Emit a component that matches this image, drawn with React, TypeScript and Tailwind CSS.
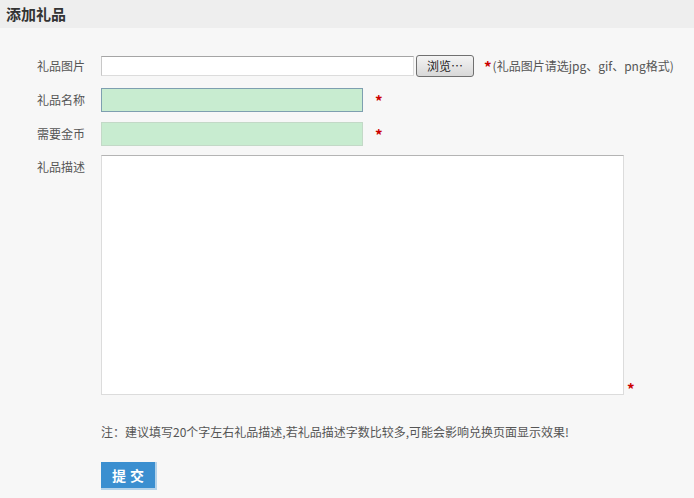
import React from "react";

const font = { fontFamily: '"Noto Sans CJK SC", "Liberation Sans", sans-serif' };

function Star() {
    return <span className="text-[15px] font-bold leading-none text-[#cc0000]">*</span>;
}

export default function App() {
    return (
        <div className="w-[694px] h-[498px] bg-[#f7f7f7] text-[12px] text-[#555]" style={font}>
            {/* title bar */}
            <div className="h-[28px] bg-[#eeeeee] pl-[6px] flex items-center">
                <h1 className="text-[15px] font-bold text-[#333]">添加礼品</h1>
            </div>

            <div className="pt-[27px]">
                {/* picture */}
                <div className="flex items-center h-[22px]">
                    <label className="w-[86px] text-right pr-[1px]">礼品图片</label>
                    <div className="ml-[15px] w-[313px] h-[20px] bg-white border border-[#dcdcdc] border-t-[#a5a5a5] border-l-[#c8c8c8]" />
                    <button className="ml-[2px] w-[58px] h-[22px] whitespace-nowrap rounded-[3px] border border-[#707070] bg-gradient-to-b from-[#f4f4f4] to-[#d8d8d8] text-[12px] text-[#222]">
                        浏览⋯
                    </button>
                    <span className="ml-[10px] flex items-center whitespace-nowrap">
                        <span className="mt-[4px]">
                            <Star />
                        </span>
                        <span className="ml-[1px]">(礼品图片请选jpg、gif、png格式)</span>
                    </span>
                </div>

                {/* name */}
                <div className="flex items-center h-[24px] mt-[11px]">
                    <label className="w-[86px] text-right pr-[1px]">礼品名称</label>
                    <div className="ml-[15px] w-[262px] h-[24px] bg-[#c8ecd0] border border-[#7e9fb0]" />
                    <span className="ml-[12px] mt-[4px]">
                        <Star />
                    </span>
                </div>

                {/* coins */}
                <div className="flex items-center h-[24px] mt-[10px]">
                    <label className="w-[86px] text-right pr-[1px]">需要金币</label>
                    <div className="ml-[15px] w-[262px] h-[24px] bg-[#c8ecd0] border border-[#c3d9c7]" />
                    <span className="ml-[12px] mt-[4px]">
                        <Star />
                    </span>
                </div>

                {/* description */}
                <div className="flex mt-[9px]">
                    <label className="w-[86px] text-right pr-[1px] pt-[3px]">礼品描述</label>
                    <div className="ml-[15px] w-[523px] h-[240px] bg-white border border-[#dcdcdc] border-t-[#b4b4b4]" />
                    <span className="ml-[3px] self-end mb-[-4px]">
                        <Star />
                    </span>
                </div>

                <p className="ml-[101px] mt-[28px] leading-[18px]">
                    注：建议填写20个字左右礼品描述,若礼品描述字数比较多,可能会影响兑换页面显示效果!
                </p>

                <button className="ml-[101px] mt-[21px] w-[56px] h-[28px] bg-[#3b8fd0] border-r-2 border-b-2 border-[#b5d3ea] text-white text-[14px] font-bold tracking-[4px] pl-[4px]">
                    提交
                </button>
            </div>
        </div>
    );
}
